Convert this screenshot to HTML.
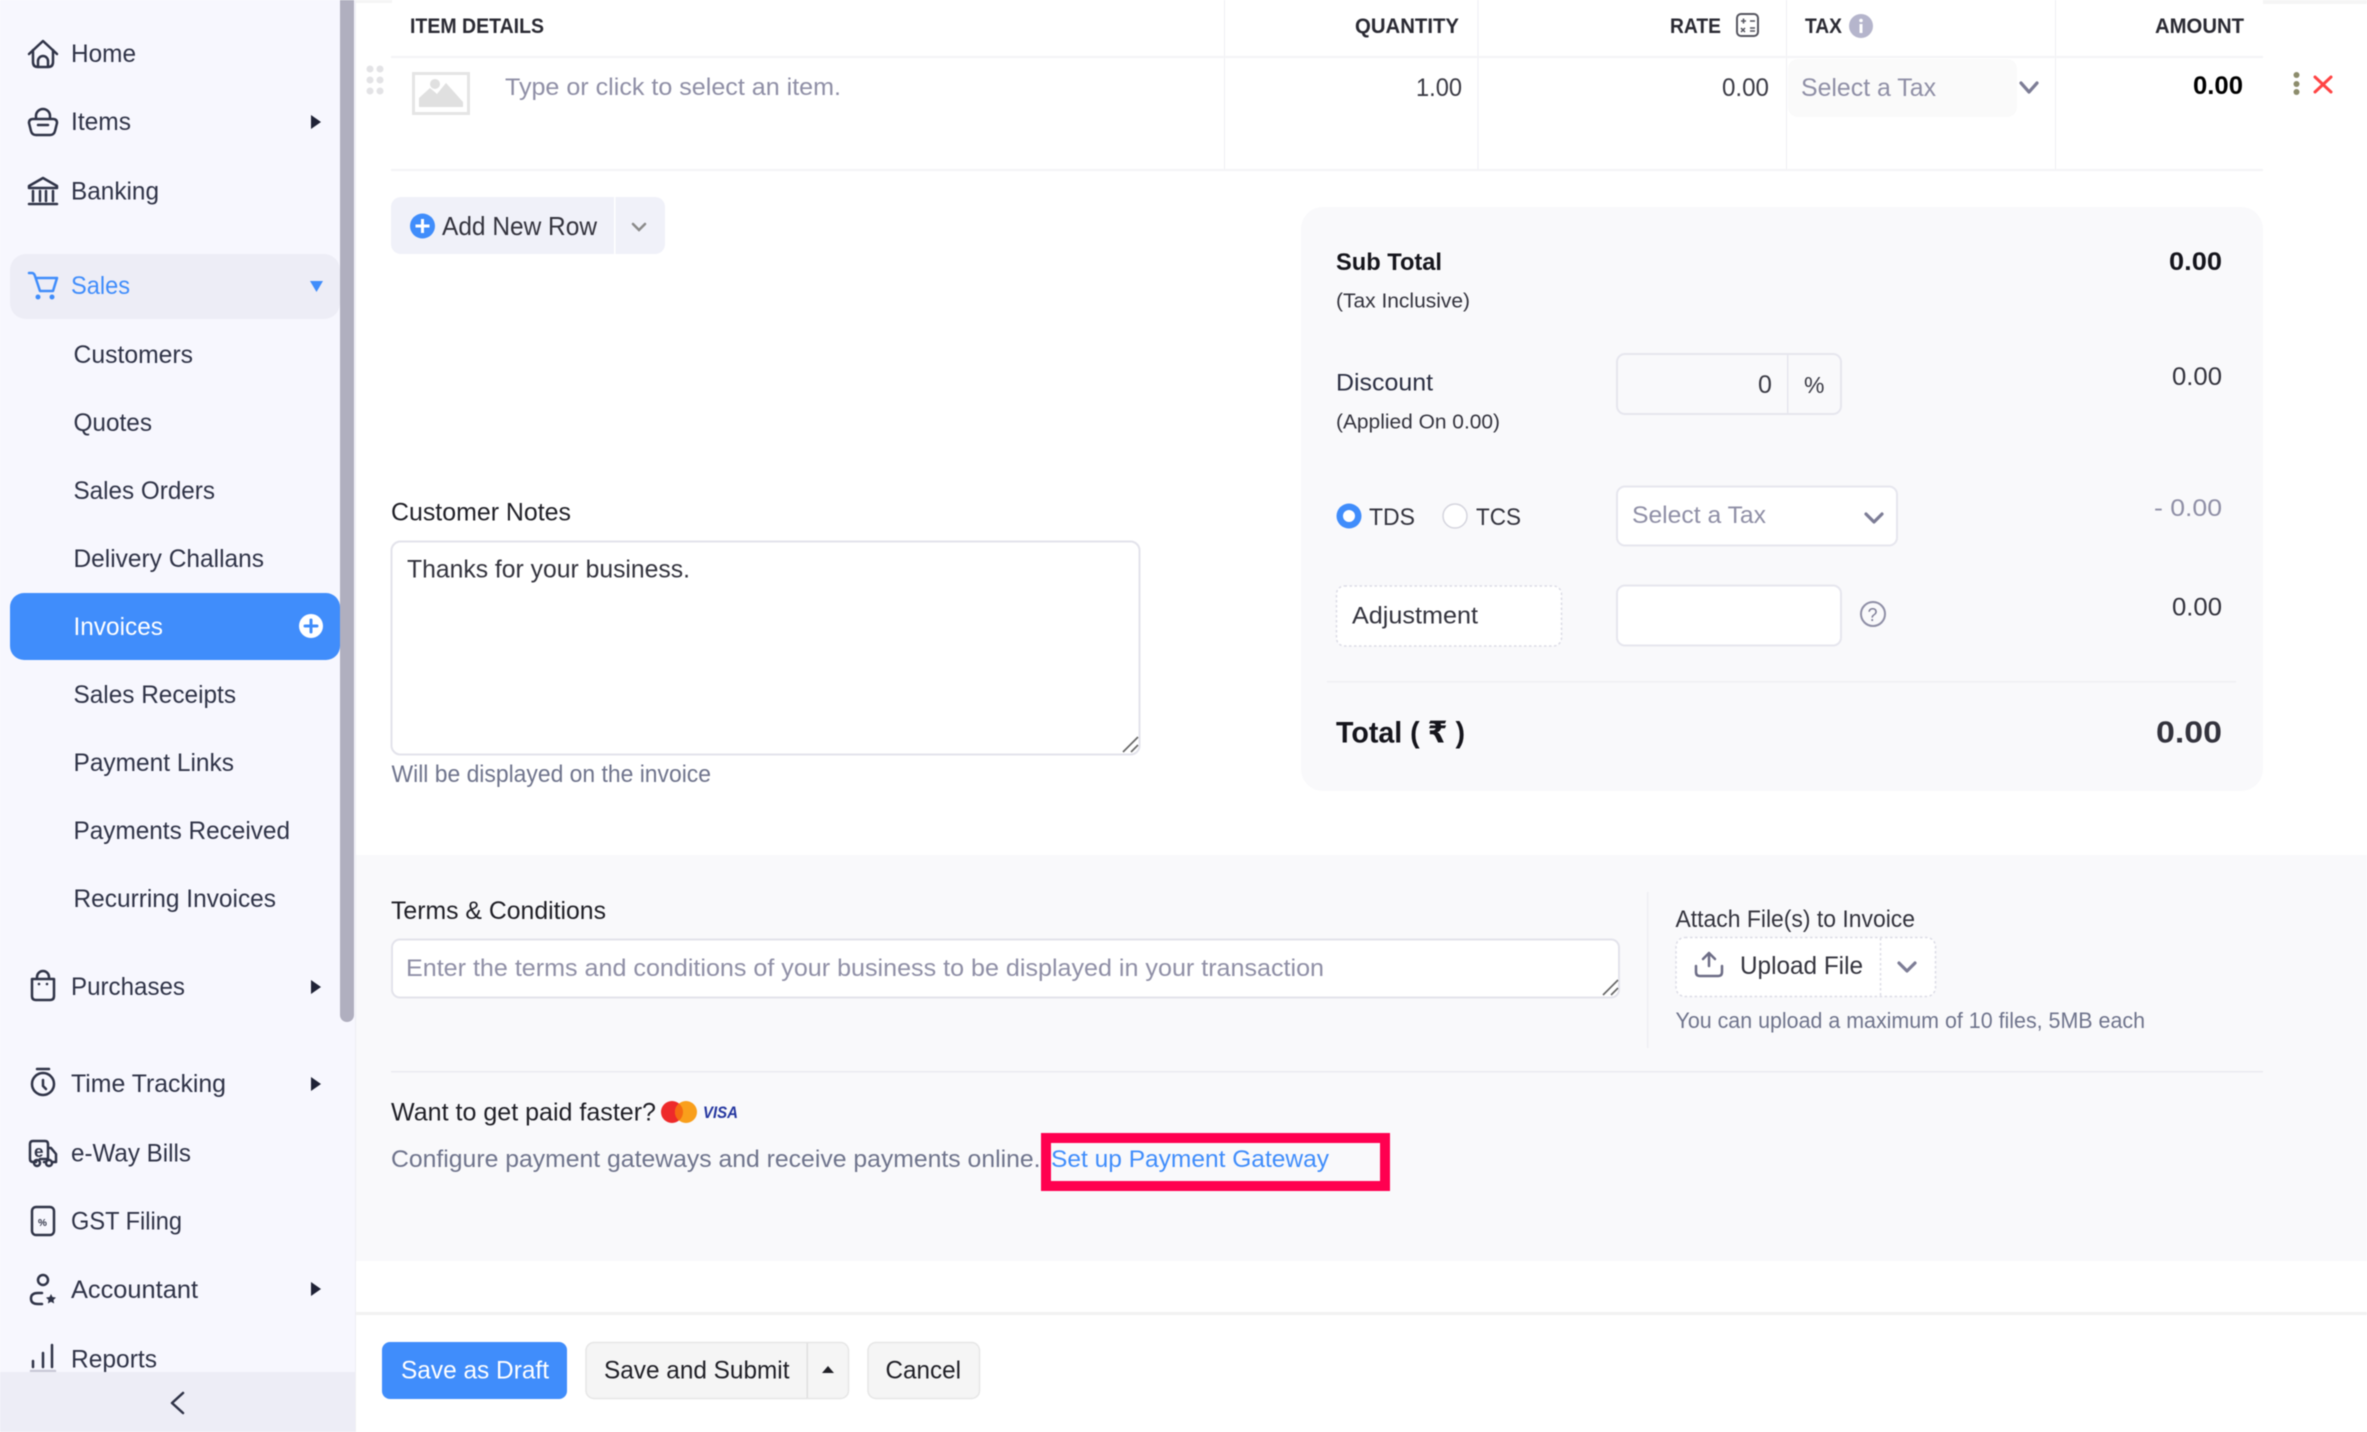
<!DOCTYPE html>
<html lang="en">
<head>
<meta charset="utf-8">
<title>New Invoice</title>
<style>
html,body{margin:0;padding:0;background:#fff;width:2367px;height:1432px;overflow:hidden}
svg{display:block;position:absolute;left:0;top:0;filter:blur(.45px)}
text{font-family:"Liberation Sans","DejaVu Sans",sans-serif;font-size:24px;fill:#2b2f42;white-space:pre}
.m{font-size:25px;fill:#2f3347}
.h{font-size:21px;font-weight:700;fill:#2a2a33}
.g{fill:#8f8fa6}
.d{fill:#6f748c}
.k{fill:#1f1f26}
.b{font-weight:700;fill:#15151c}
.s{font-size:20px;fill:#33333d}
.i{fill:none;stroke:#2f3347;stroke-width:2.5;stroke-linecap:round;stroke-linejoin:round}
.c{fill:none;stroke:#7d7d96;stroke-width:3.2;stroke-linecap:round;stroke-linejoin:round}
</style>
</head>
<body>
<svg width="2367" height="1432" viewBox="0 0 2367 1432" xmlns="http://www.w3.org/2000/svg">
<!-- backgrounds -->
<rect width="2367" height="1432" fill="#fff"/>
<rect x="356" y="0" width="36" height="3" fill="#f5f5f5"/>
<rect x="2263" y="0" width="104" height="4" fill="#f5f5f5"/>
<rect x="356" y="855" width="2011" height="406" fill="#f9f9fb"/>

<!-- sidebar -->
<rect x="0" y="0" width="355" height="1432" fill="#f7f7fe"/>
<rect x="355" y="0" width="1" height="1432" fill="#eeeef3"/>
<rect x="340" y="-8" width="14" height="1030" rx="7" fill="#b0afbf"/>
<rect x="10" y="254" width="330" height="65" rx="16" fill="#ededf6"/>
<rect x="10" y="593" width="330" height="67" rx="14" fill="#408dfb"/>

<text class="m" x="71" y="62" textLength="65" lengthAdjust="spacingAndGlyphs">Home</text>
<text class="m" x="71" y="130" textLength="60" lengthAdjust="spacingAndGlyphs">Items</text>
<text class="m" x="71" y="199.500" textLength="88" lengthAdjust="spacingAndGlyphs">Banking</text>
<text class="m" x="71" y="294" textLength="59" lengthAdjust="spacingAndGlyphs" style="fill:#408dfb">Sales</text>
<text class="m" x="73.500" y="363" textLength="119.500" lengthAdjust="spacingAndGlyphs">Customers</text>
<text class="m" x="73.500" y="431" textLength="78.500" lengthAdjust="spacingAndGlyphs">Quotes</text>
<text class="m" x="73.500" y="499" textLength="141.500" lengthAdjust="spacingAndGlyphs">Sales Orders</text>
<text class="m" x="73.500" y="567" textLength="190.500" lengthAdjust="spacingAndGlyphs">Delivery Challans</text>
<text class="m" x="73.500" y="635" textLength="89.500" lengthAdjust="spacingAndGlyphs" style="fill:#fff">Invoices</text>
<text class="m" x="73.500" y="703" textLength="162.500" lengthAdjust="spacingAndGlyphs">Sales Receipts</text>
<text class="m" x="73.500" y="771" textLength="160.500" lengthAdjust="spacingAndGlyphs">Payment Links</text>
<text class="m" x="73.500" y="839" textLength="216.500" lengthAdjust="spacingAndGlyphs">Payments Received</text>
<text class="m" x="73.500" y="907" textLength="202.500" lengthAdjust="spacingAndGlyphs">Recurring Invoices</text>
<text class="m" x="71" y="995" textLength="114" lengthAdjust="spacingAndGlyphs">Purchases</text>
<text class="m" x="71" y="1092" textLength="155" lengthAdjust="spacingAndGlyphs">Time Tracking</text>
<text class="m" x="71" y="1161.500" textLength="120" lengthAdjust="spacingAndGlyphs">e-Way Bills</text>
<text class="m" x="71" y="1229.500" textLength="111" lengthAdjust="spacingAndGlyphs">GST Filing</text>
<text class="m" x="71" y="1298" textLength="127" lengthAdjust="spacingAndGlyphs">Accountant</text>
<text class="m" x="71" y="1367.500" textLength="86" lengthAdjust="spacingAndGlyphs">Reports</text>

<!-- arrows -->
<g fill="#1f2236">
<path d="M311 115l10 7-10 7z"/>
<path d="M311 980l10 7-10 7z"/>
<path d="M311 1077l10 7-10 7z"/>
<path d="M311 1282l10 7-10 7z"/>
</g>
<path d="M310 281h13l-6.500 11z" fill="#408dfb"/>
<circle cx="311" cy="626" r="12" fill="#fff"/>
<path d="M311 620v12M305 626h12" stroke="#408dfb" stroke-width="3" stroke-linecap="round"/>

<!-- sidebar icons -->
<g class="i">
<path d="M29 54L43 41l14 13M33 50v12q0 5 5 5h10q5 0 5-5V50M38 67v-6a5 5 0 0 1 10 0v6"/>
<path d="M33 119h20q4 0 4 4l-2 8q-1 4-5 4H36q-4 0-5-4l-2-8q0-4 4-4zM36 119v-3a7 7 0 0 1 14 0v3M38 125h10"/>
<path d="M43 178l-14 8v2h28v-2zM29 204h28M33 191v10M40 191v10M46 191v10M53 191v10"/>
<path d="M29 273h3q2 0 3 3l5 15h13l4-13H36" style="stroke:#408dfb"/>
<path d="M32 979h22v17q0 4-4 4H36q-4 0-4-4zM37 979v-2a6 6 0 0 1 12 0v2"/>
<path d="M37 1069h12M43 1080v6l3 3"/>
<circle cx="43" cy="1084" r="11"/>
<path d="M36 1162h-3q-3 0-3-3v-15q0-3 3-3h12q3 0 3 3v15H40M48 1148h3l5 6v8h-3M46 1162h-2"/>
<circle cx="37" cy="1163" r="3"/>
<circle cx="49" cy="1163" r="3"/>
<rect x="32" y="1207" width="22" height="28" rx="4"/>
<circle cx="43" cy="1280" r="5"/>
<path d="M42 1293h-4q-7 0-7 5.500t7 5.500h4"/>
<path d="M33 1361v6M43 1353v14M52 1345v22"/>
<path d="M31 1371h24" style="stroke:#c8c8d6"/>
</g>
<circle cx="38" cy="297" r="2.500" fill="#408dfb"/>
<circle cx="52" cy="297" r="2.500" fill="#408dfb"/>
<circle cx="39" cy="984" r="1.300" fill="#2f3347"/>
<circle cx="47" cy="984" r="1.300" fill="#2f3347"/>
<text x="34" y="1157" style="font-size:17px;font-weight:700;fill:#2f3347">e</text>
<text x="38" y="1226" style="font-size:10px;font-weight:700;fill:#2f3347">%</text>
<path d="M51 1294l1.500 3 3.500.5-2.500 2.500.6 3.500-3.100-1.700-3.100 1.700.6-3.500-2.500-2.500 3.500-.5z" fill="#2f3347"/>
<rect x="0" y="1372" width="355" height="60" fill="#ededf6"/>
<path class="i" d="M183 1393l-11 10 11 10"/>

<!-- table -->
<g fill="#eeeef3">
<rect x="1224" y="0" width="1" height="170"/>
<rect x="1477.500" y="0" width="1" height="170"/>
<rect x="1786" y="0" width="1" height="170"/>
<rect x="2055" y="0" width="1" height="170"/>
</g>
<rect x="391" y="56" width="1872" height="2" fill="#f4f4f6"/>
<rect x="391" y="169" width="1872" height="2" fill="#f4f4f6"/>
<text class="h" x="410" y="33" textLength="134" lengthAdjust="spacingAndGlyphs">ITEM DETAILS</text>
<text class="h" x="1355" y="33" textLength="104" lengthAdjust="spacingAndGlyphs">QUANTITY</text>
<text class="h" x="1670" y="33" textLength="51" lengthAdjust="spacingAndGlyphs">RATE</text>
<text class="h" x="1805" y="33" textLength="37" lengthAdjust="spacingAndGlyphs">TAX</text>
<text class="h" x="2155" y="33" textLength="89" lengthAdjust="spacingAndGlyphs">AMOUNT</text>
<rect x="1737" y="14" width="21" height="22" rx="4" fill="none" stroke="#55555f" stroke-width="2"/>
<path d="M1741 21h5M1743.500 18.500v5M1750 21h5M1741 28l4 4M1745 28l-4 4M1750 28h5M1750 31h5" stroke="#55555f" stroke-width="1.500" fill="none"/>
<circle cx="1861" cy="26" r="12" fill="#b5b5cc"/>
<circle cx="1861" cy="20.500" r="1.800" fill="#fff"/>
<rect x="1859.500" y="24" width="3" height="9" fill="#fff"/>
<g fill="#e3e3e6">
<circle cx="370" cy="69" r="3.500"/><circle cx="380" cy="69" r="3.500"/>
<circle cx="370" cy="80" r="3.500"/><circle cx="380" cy="80" r="3.500"/>
<circle cx="370" cy="91" r="3.500"/><circle cx="380" cy="91" r="3.500"/>
</g>
<rect x="413.500" y="73.500" width="55" height="40" fill="#fff" stroke="#e5e5e5" stroke-width="3"/>
<path d="M419 107v-9l11-10 7 6 9-11 17 19v5z" fill="#e0e0e0"/>
<circle cx="435" cy="84" r="5" fill="#e0e0e0"/>
<text class="g" x="505" y="95" textLength="336" lengthAdjust="spacingAndGlyphs">Type or click to select an item.</text>
<text x="1416" y="96" textLength="46" lengthAdjust="spacingAndGlyphs" style="font-size:25px;fill:#3a3a44">1.00</text>
<text x="1722" y="96" textLength="47" lengthAdjust="spacingAndGlyphs" style="font-size:25px;fill:#3a3a44">0.00</text>
<rect x="1788" y="59" width="229" height="58" rx="10" fill="#fafafa"/>
<text class="g" x="1801" y="96" textLength="135" lengthAdjust="spacingAndGlyphs" style="font-size:25px">Select a Tax</text>
<path class="c" d="M2021 83l8 9 8-9"/>
<text class="b" x="2193" y="94" textLength="50" lengthAdjust="spacingAndGlyphs" style="font-size:25px;fill:#000">0.00</text>
<g fill="#8c8c6c"><circle cx="2296.500" cy="75" r="3"/><circle cx="2296.500" cy="84" r="3"/><circle cx="2296.500" cy="92" r="3"/></g>
<path d="M2315 77l16 15M2331 77l-16 15" stroke="#f44" stroke-width="3" stroke-linecap="round"/>

<!-- add row -->
<rect x="391" y="197" width="274" height="57" rx="10" fill="#f0f1f9"/>
<rect x="614" y="197" width="1.500" height="57" fill="#fff"/>
<circle cx="422.500" cy="226" r="12.500" fill="#408dfb"/>
<path d="M422.500 219v14M415.500 226h14" stroke="#fff" stroke-width="3"/>
<text x="442" y="235" textLength="155" lengthAdjust="spacingAndGlyphs" style="font-size:26px;fill:#33333d">Add New Row</text>
<path d="M633 224l6 6 6-6" fill="none" stroke="#8a8a8a" stroke-width="2.500" stroke-linecap="round"/>

<!-- notes -->
<text class="k" x="391" y="520.500" textLength="180" lengthAdjust="spacingAndGlyphs" style="font-size:25px">Customer Notes</text>
<rect x="391.500" y="541.500" width="748" height="213" rx="9" fill="#fff" stroke="#e3e3eb" stroke-width="2"/>
<text x="407" y="577.500" textLength="283" lengthAdjust="spacingAndGlyphs" style="font-size:25px;fill:#33333d">Thanks for your business.</text>
<path d="M1123 752l15-15M1131 752l7-7" stroke="#666" stroke-width="1.600"/>
<text class="d" x="391.500" y="782" textLength="319.500" lengthAdjust="spacingAndGlyphs">Will be displayed on the invoice</text>

<!-- totals panel -->
<rect x="1301" y="207" width="962" height="584" rx="22" fill="#f9f9fb"/>
<text class="b" x="1336" y="270" textLength="106" lengthAdjust="spacingAndGlyphs">Sub Total</text>
<text class="b" x="2169" y="270" textLength="53" lengthAdjust="spacingAndGlyphs" style="font-size:25px">0.00</text>
<text class="s" x="1336" y="307.500" textLength="134" lengthAdjust="spacingAndGlyphs">(Tax Inclusive)</text>
<text x="1336" y="390.500" textLength="97" lengthAdjust="spacingAndGlyphs">Discount</text>
<text class="s" x="1336" y="428.500" textLength="164" lengthAdjust="spacingAndGlyphs">(Applied On 0.00)</text>
<rect x="1617" y="354" width="224" height="60" rx="8" fill="#f9f9fb" stroke="#e6e6ee" stroke-width="2"/>
<rect x="1787" y="354" width="1.500" height="60" fill="#e6e6ee"/>
<text x="1758" y="393" style="font-size:25px;fill:#3a3a44">0</text>
<text x="1804" y="393" style="font-size:23px;fill:#3a3a44">%</text>
<text x="2172" y="385" textLength="50" lengthAdjust="spacingAndGlyphs" style="font-size:25px;fill:#33333d">0.00</text>
<circle cx="1349" cy="516" r="12.500" fill="#408dfb"/>
<circle cx="1349" cy="516" r="6" fill="#fff"/>
<text x="1369" y="525" textLength="46" lengthAdjust="spacingAndGlyphs" style="fill:#33333d">TDS</text>
<circle cx="1455" cy="516" r="12" fill="#fff" stroke="#d5d5de" stroke-width="1.500"/>
<text x="1476" y="525" textLength="45" lengthAdjust="spacingAndGlyphs" style="fill:#33333d">TCS</text>
<rect x="1617" y="486.500" width="280" height="59" rx="8" fill="#fff" stroke="#e6e6ee" stroke-width="2"/>
<text class="g" x="1632" y="523" textLength="134" lengthAdjust="spacingAndGlyphs">Select a Tax</text>
<path class="c" d="M1866 514l8 8 8-8"/>
<text class="g" x="2154" y="516" textLength="68" lengthAdjust="spacingAndGlyphs">- 0.00</text>
<rect x="1336.500" y="586" width="225" height="60" rx="8" fill="#fff" stroke="#dcdce6" stroke-width="1.500" stroke-dasharray="2.500 2.500"/>
<text x="1352" y="623.500" textLength="126" lengthAdjust="spacingAndGlyphs" style="fill:#33333d">Adjustment</text>
<rect x="1617" y="585.500" width="224" height="60" rx="8" fill="#fff" stroke="#e6e6ee" stroke-width="2"/>
<circle cx="1873" cy="614" r="12" fill="none" stroke="#8f8fa6" stroke-width="2"/>
<text x="1867.500" y="621" style="font-size:18px;fill:#7d7d96">?</text>
<text x="2172" y="615.500" textLength="50" lengthAdjust="spacingAndGlyphs" style="font-size:25px;fill:#33333d">0.00</text>
<rect x="1327" y="681" width="909" height="1.500" fill="#efeff3"/>
<text class="b" x="1336" y="742.500" textLength="129" lengthAdjust="spacingAndGlyphs" style="font-size:30px">Total ( ₹ )</text>
<text x="2156" y="742.500" textLength="66" lengthAdjust="spacingAndGlyphs" style="font-size:31px;font-weight:700;fill:#33333d">0.00</text>

<!-- terms -->
<text class="k" x="391" y="919" textLength="215" lengthAdjust="spacingAndGlyphs" style="font-size:25px">Terms &amp; Conditions</text>
<rect x="392" y="939.500" width="1227" height="58" rx="8" fill="#fff" stroke="#e3e3eb" stroke-width="2"/>
<text class="g" x="406" y="976" textLength="918" lengthAdjust="spacingAndGlyphs">Enter the terms and conditions of your business to be displayed in your transaction</text>
<path d="M1603 995l15-15M1611 995l7-7" stroke="#666" stroke-width="1.600"/>
<rect x="1647" y="892" width="1.500" height="156" fill="#eeeef3"/>
<text x="1675.500" y="927" textLength="239.500" lengthAdjust="spacingAndGlyphs" style="fill:#33333d">Attach File(s) to Invoice</text>
<rect x="1676" y="937.500" width="259.500" height="59" rx="9" fill="#fff" stroke="#dcdce6" stroke-width="1.500" stroke-dasharray="2.500 2.500"/>
<path d="M1880.500 938v58" stroke="#dcdce6" stroke-width="1.500" stroke-dasharray="2.500 2.500"/>
<path d="M1696 966v6q0 4 4 4h18q4 0 4-4v-6M1709 966v-13M1703 959l6-6 6 6" fill="none" stroke="#6d6d86" stroke-width="2.500" stroke-linecap="round" stroke-linejoin="round"/>
<text x="1740" y="974" textLength="123" lengthAdjust="spacingAndGlyphs" style="font-size:25px;fill:#33333d">Upload File</text>
<path class="c" d="M1899 963l8 8 8-8"/>
<text class="d" x="1675.500" y="1028" textLength="469.500" lengthAdjust="spacingAndGlyphs" style="font-size:22px">You can upload a maximum of 10 files, 5MB each</text>
<rect x="391" y="1071" width="1872" height="1.500" fill="#ebebf0"/>

<!-- payment -->
<text class="k" x="391" y="1120.500" textLength="265" lengthAdjust="spacingAndGlyphs" style="font-size:25px">Want to get paid faster?</text>
<circle cx="672" cy="1112" r="11" fill="#ee2a2a"/>
<circle cx="686" cy="1112" r="11" fill="#f99f1b"/>
<path d="M679 1103.500a11 11 0 0 1 0 17a11 11 0 0 1 0-17z" fill="#f56a12"/>
<text x="703" y="1118" textLength="35" lengthAdjust="spacingAndGlyphs" style="font-size:17px;font-weight:700;font-style:italic;fill:#24369f">VISA</text>
<text class="d" x="391" y="1167" textLength="649.500" lengthAdjust="spacingAndGlyphs">Configure payment gateways and receive payments online.</text>
<text x="1051" y="1167" textLength="278" lengthAdjust="spacingAndGlyphs" style="fill:#408dfb">Set up Payment Gateway</text>
<rect x="1046" y="1138" width="339" height="48" fill="none" stroke="#ff0050" stroke-width="10"/>

<!-- footer -->
<rect x="356" y="1312" width="2011" height="3" fill="#f2f2f2"/>
<rect x="382" y="1342" width="185" height="57" rx="8" fill="#408dfb"/>
<text x="401" y="1378.500" textLength="148" lengthAdjust="spacingAndGlyphs" style="font-size:25px;fill:#fff">Save as Draft</text>
<rect x="586" y="1342.500" width="262.500" height="56" rx="8" fill="#f5f5f5" stroke="#e6e6e6" stroke-width="1.500"/>
<rect x="806.500" y="1343" width="1.500" height="55" fill="#e0e0e0"/>
<text class="k" x="604" y="1378.500" textLength="185.500" lengthAdjust="spacingAndGlyphs" style="font-size:25px">Save and Submit</text>
<path d="M822 1373l6-7 6 7z" fill="#1f1f26"/>
<rect x="868" y="1342.500" width="111.500" height="56" rx="8" fill="#f5f5f5" stroke="#e6e6e6" stroke-width="1.500"/>
<text class="k" x="885.500" y="1378.500" textLength="75.500" lengthAdjust="spacingAndGlyphs" style="font-size:25px">Cancel</text>
</svg>
</body>
</html>
